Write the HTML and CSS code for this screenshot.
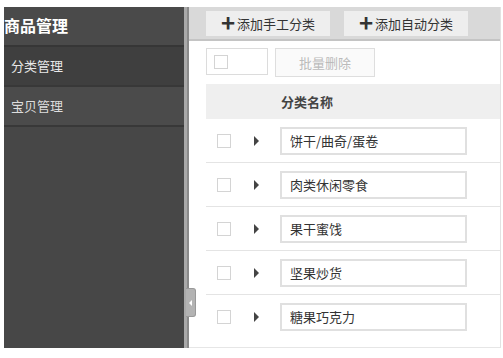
FILE: index.html
```html
<!DOCTYPE html>
<html lang="zh-CN">
<head>
    <meta charset="UTF-8">
    <title>商品管理</title>
    <link rel="stylesheet" href="styles.css">
</head>
<body>
    <div class="app">
        <div class="sidebar">
            <div class="side-title">商品管理</div>
            <div class="side-item active">分类管理</div>
            <div class="side-item">宝贝管理</div>
        </div>

        <div class="splitter">
            <div class="handle"><span class="handle-arrow"></span></div>
        </div>

        <div class="main">
            <div class="toolbar">
                <button class="tool-btn"><span class="plus">+</span>添加手工分类</button>
                <button class="tool-btn"><span class="plus">+</span>添加自动分类</button>
            </div>

            <div class="actions">
                <div class="select-box"><span class="check"></span></div>
                <button class="del-btn">批量删除</button>
            </div>

            <div class="list">
                <div class="list-head">分类名称</div>
                <div class="row">
                    <span class="check"></span>
                    <span class="arrow"></span>
                    <input class="name-input" type="text" value="饼干/曲奇/蛋卷">
                </div>
                <div class="row">
                    <span class="check"></span>
                    <span class="arrow"></span>
                    <input class="name-input" type="text" value="肉类休闲零食">
                </div>
                <div class="row">
                    <span class="check"></span>
                    <span class="arrow"></span>
                    <input class="name-input" type="text" value="果干蜜饯">
                </div>
                <div class="row">
                    <span class="check"></span>
                    <span class="arrow"></span>
                    <input class="name-input" type="text" value="坚果炒货">
                </div>
                <div class="row last">
                    <span class="check"></span>
                    <span class="arrow"></span>
                    <input class="name-input" type="text" value="糖果巧克力">
                </div>
            </div>
        </div>
    </div>
</body>
</html>
```

FILE: styles.css
```css
body {
    margin: 0;
    padding: 7px 2px 0 4px;
    background: #fff;
    font-family: "Noto Sans CJK SC", "Noto Sans", sans-serif;
    font-size: 13px;
    color: #333;
}
.app {
    display: flex;
    height: 341px;
}
.sidebar {
    width: 180px;
    background: #474747;
}
.side-title {
    height: 38px;
    line-height: 36px;
    font-size: 16px;
    font-weight: bold;
    color: #fff;
    padding-left: 0;
    background: #4a4a4a;
    border-bottom: 2px solid #363636;
}
.side-item {
    height: 38px;
    line-height: 38px;
    padding-left: 7px;
    color: #ddd;
    background: #4b4b4b;
    border-bottom: 2px solid #383838;
}
.side-item.active {
    background: #3f3f3f;
    color: #e8e8e8;
}
.splitter {
    width: 3px;
    background: #a9a9a9;
    border-right: 2px solid #8a8a8a;
    position: relative;
}
.handle {
    position: absolute;
    left: 2px;
    top: 281px;
    width: 9px;
    height: 27px;
    background: #b3b3b3;
    border: 1px solid #999;
    border-left: none;
    border-radius: 0 3px 3px 0;
    display: flex;
    align-items: center;
    justify-content: center;
    z-index: 2;
}
.handle-arrow {
    width: 0;
    height: 0;
    border-top: 3px solid transparent;
    border-bottom: 3px solid transparent;
    border-right: 3px solid #fff;
}
.main {
    flex: 1;
    display: flex;
    flex-direction: column;
    border-right: 1px solid #e2e2e2;
    border-bottom: 1px solid #e6e6e6;
}
.toolbar {
    height: 32px;
    background: #d9d9d9;
    border-bottom: 2px solid #c4c4c4;
    display: flex;
    align-items: center;
    gap: 14px;
    padding-left: 17px;
}
.tool-btn {
    height: 25px;
    width: 124px;
    border: none;
    background: #eeeeee;
    font-family: inherit;
    font-size: 13px;
    color: #333;
    padding: 0;
    display: flex;
    align-items: center;
    justify-content: center;
}
.plus {
    font-size: 24px;
    font-weight: bold;
    line-height: 20px;
    margin: -2px 2px 0 0;
    color: #333;
}
.actions {
    display: flex;
    gap: 7px;
    padding: 7px 0 0 17px;
    height: 29px;
}
.select-box {
    width: 62px;
    height: 27px;
    border: 1px solid #dcdcdc;
    display: flex;
    align-items: center;
    padding-left: 7px;
    box-sizing: border-box;
}
.del-btn {
    width: 100px;
    height: 29px;
    border: 1px solid #dedede;
    background: #fafafa;
    color: #bbb;
    font-family: inherit;
    font-size: 13px;
    padding: 0;
}
.check {
    display: inline-block;
    width: 12px;
    height: 12px;
    border: 1px solid #d4d4d4;
    background: #fff;
    flex-shrink: 0;
}
.list {
    margin: 7px 0 0 17px;
}
.list-head {
    height: 35px;
    line-height: 35px;
    background: #efefef;
    padding-left: 75px;
    font-weight: bold;
    color: #444;
}
.row {
    height: 43px;
    display: flex;
    align-items: center;
    border-bottom: 1px solid #e4e4e4;
    padding-left: 11px;
}
.row.last {
    border-bottom: none;
}
.arrow {
    width: 0;
    height: 0;
    margin-left: 23px;
    border-top: 5px solid transparent;
    border-bottom: 5px solid transparent;
    border-left: 5px solid #444;
}
.name-input {
    margin-left: 21px;
    width: 187px;
    height: 28px;
    box-sizing: border-box;
    border: 2px solid #e0e0e0;
    padding: 0 8px;
    font-family: inherit;
    font-size: 13px;
    color: #333;
    outline: none;
}
```
